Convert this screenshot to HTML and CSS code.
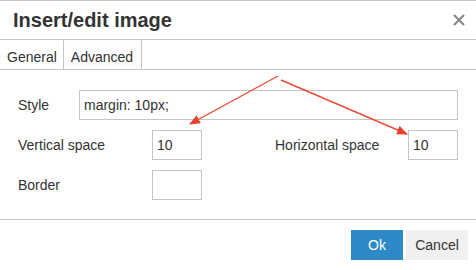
FILE: index.html
```html
<!DOCTYPE html>
<html lang="en">
<head>
  <meta charset="UTF-8">
  <meta name="viewport" content="width=device-width, initial-scale=1">
  <title>Insert/edit image</title>
  <link rel="stylesheet" href="styles.css">
</head>
<body>
<div class="dialog">
  <div class="cabecalho">
    <span class="titulo">Insert/edit image</span>
    <svg class="fechar" width="12" height="12" viewBox="0 0 12 12">
      <path d="M1,1 L11,11 M11,1 L1,11" stroke="#858585" stroke-width="2" stroke-linecap="butt"/>
    </svg>
  </div>

  <div class="abas">
    <div class="aba">General</div>
    <div class="aba ativa">Advanced</div>
  </div>

  <div class="corpo">
    <div class="linha">
      <label class="rotulo rotulo-style">Style</label>
      <input class="campo campo-largo" type="text" value="margin: 10px;">
    </div>
    <div class="linha">
      <label class="rotulo rotulo-vert">Vertical space</label>
      <input class="campo campo-curto" type="text" value="10">
      <label class="rotulo rotulo-horiz">Horizontal space</label>
      <input class="campo campo-curto" type="text" value="10">
    </div>
    <div class="linha">
      <label class="rotulo rotulo-vert">Border</label>
      <input class="campo campo-curto" type="text" value="">
    </div>
  </div>

  <div class="rodape">
    <button class="btn btn-ok">Ok</button>
    <button class="btn btn-cancelar">Cancel</button>
  </div>

  <!-- setas de anotação por cima do formulário -->
  <svg class="setas" width="476" height="270" viewBox="0 0 476 270">
    <defs>
      <marker id="ponta" markerWidth="11" markerHeight="9" refX="10" refY="4.5" orient="auto" markerUnits="userSpaceOnUse">
        <path d="M0,0 L11,4.5 L0,9 Z" fill="#e8402b"/>
      </marker>
    </defs>
    <line x1="278" y1="76" x2="190" y2="124" stroke="#ea4a35" stroke-width="1.4" marker-end="url(#ponta)"/>
    <line x1="281" y1="80" x2="407" y2="134" stroke="#ea4a35" stroke-width="1.4" marker-end="url(#ponta)"/>
  </svg>
</div>
</body>
</html>
```

FILE: styles.css
```css
body {
  margin: 0;
  font-family: "Liberation Sans", Arial, sans-serif;
  background: #ffffff;
  color: #333333;
}
.dialog {
  position: relative;
  width: 476px;
  height: 270px;
  border-top: 1px solid #c5c5c5;
  box-sizing: border-box;
  overflow: hidden;
}
.cabecalho {
  height: 38px;
  border-bottom: 1px solid #c5c5c5;
  display: flex;
  align-items: center;
  justify-content: space-between;
  padding: 0 11px 0 13px;
}
.titulo {
  font-size: 20px;
  font-weight: bold;
  line-height: 38px;
  color: #333333;
}
.fechar {
  display: block;
}
.abas {
  display: flex;
  border-bottom: 1px solid #c5c5c5;
  height: 29px;
}
.aba {
  font-size: 14px;
  line-height: 16px;
  padding: 9px 6px 4px 7px;
}
.aba.ativa {
  border-left: 1px solid #c5c5c5;
  border-right: 1px solid #c5c5c5;
  padding: 9px 8px 4px 7px;
  background: #fdfdfd;
}
.corpo {
  padding: 20px 18px 19px 18px;
  display: flex;
  flex-direction: column;
  gap: 10px;
}
.linha {
  display: flex;
  align-items: center;
  height: 30px;
}
.rotulo {
  font-size: 14px;
  color: #333333;
}
.rotulo-style {
  width: 61px;
}
.rotulo-vert {
  width: 134px;
}
.rotulo-horiz {
  width: 133px;
  margin-left: 73px;
}
.campo {
  height: 30px;
  box-sizing: border-box;
  border: 1px solid #c5c5c5;
  padding: 0 4px;
  font-family: "Liberation Sans", Arial, sans-serif;
  font-size: 14px;
  color: #333333;
  outline: none;
}
.campo-largo {
  flex: 1;
}
.campo-curto {
  width: 50px;
}
.rodape {
  border-top: 1px solid #c5c5c5;
  display: flex;
  justify-content: flex-end;
  gap: 3px;
  padding: 10px 8px 0 0;
}
.btn {
  height: 30px;
  border: none;
  font-family: "Liberation Sans", Arial, sans-serif;
  font-size: 14px;
  padding: 0;
}
.btn-ok {
  width: 52px;
  background: #2d8ac7;
  color: #ffffff;
}
.btn-cancelar {
  width: 62px;
  background: #f0f0f0;
  color: #333333;
}
.setas {
  position: absolute;
  left: 0;
  top: -1px;
  pointer-events: none;
}
```
